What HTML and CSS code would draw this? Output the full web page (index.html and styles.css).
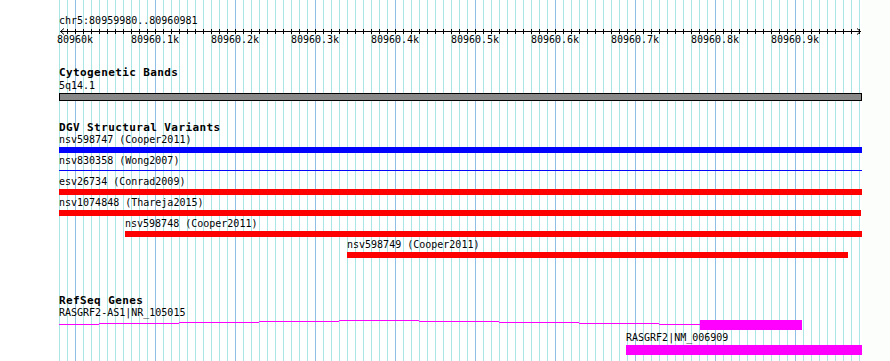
FILE: index.html
```html
<!DOCTYPE html>
<html lang="en">
<head>
  <meta charset="UTF-8" />
  <title>chr5:80959980..80960981</title>
  <link rel="stylesheet" href="styles.css">
</head>
<body>
  <div class="panel">
    <!-- guidelines: every 8px, darker every 80px -->
    <svg class="grid" width="803" height="361" shape-rendering="crispEdges">
      <defs>
        <pattern id="guides" width="80" height="10" patternUnits="userSpaceOnUse">
          <rect x="0" width="1" height="10" class="minor"/>
          <rect x="8" width="1" height="10" class="minor"/>
          <rect x="16" width="1" height="10" class="major"/>
          <rect x="24" width="1" height="10" class="minor"/>
          <rect x="32" width="1" height="10" class="minor"/>
          <rect x="40" width="1" height="10" class="minor"/>
          <rect x="48" width="1" height="10" class="minor"/>
          <rect x="56" width="1" height="10" class="minor"/>
          <rect x="64" width="1" height="10" class="minor"/>
          <rect x="72" width="1" height="10" class="minor"/>
        </pattern>
      </defs>
      <rect width="803" height="361" fill="url(#guides)"/>
    </svg>

    <!-- base position ruler -->
    <div class="ruler">
      <div class="label">chr5:80959980..80960981</div>
      <svg class="axis" width="803" height="9" viewBox="0 0 803 9">
        <defs>
          <pattern id="ticks" width="8" height="9" patternUnits="userSpaceOnUse">
            <rect x="0" y="3" width="1" height="5" fill="#000"/>
          </pattern>
        </defs>
        <rect x="8" y="0" width="793" height="9" fill="url(#ticks)" shape-rendering="crispEdges"/>
        <rect x="1" y="5" width="801" height="1" fill="#000" shape-rendering="crispEdges"/>
        <path d="M5 2.5L1.5 5.5L5 8.5M798 2.5L801.5 5.5L798 8.5" fill="none" stroke="#000"/>
      </svg>
      <div class="scale">
        <span>80960k</span>
        <span>80960.1k</span>
        <span>80960.2k</span>
        <span>80960.3k</span>
        <span>80960.4k</span>
        <span>80960.5k</span>
        <span>80960.6k</span>
        <span>80960.7k</span>
        <span>80960.8k</span>
        <span>80960.9k</span>
      </div>
    </div>

    <!-- Cytogenetic Bands -->
    <section class="track cyto">
      <h3>Cytogenetic Bands</h3>
      <div class="label">5q14.1</div>
      <div class="band"></div>
    </section>

    <!-- DGV Structural Variants -->
    <section class="track dgv">
      <h3>DGV Structural Variants</h3>
      <div class="feature">
        <div class="label">nsv598747 (Cooper2011)</div>
        <div class="bar gain" style="margin-left:0;width:803px"></div>
      </div>
      <div class="feature">
        <div class="label">nsv830358 (Wong2007)</div>
        <div class="bar thin" style="margin-left:0;width:803px"></div>
      </div>
      <div class="feature">
        <div class="label">esv26734 (Conrad2009)</div>
        <div class="bar loss" style="margin-left:0;width:803px"></div>
      </div>
      <div class="feature">
        <div class="label">nsv1074848 (Thareja2015)</div>
        <div class="bar loss" style="margin-left:0;width:802px"></div>
      </div>
      <div class="feature">
        <div class="label" style="margin-left:66px">nsv598748 (Cooper2011)</div>
        <div class="bar loss" style="margin-left:66px;width:737px"></div>
      </div>
      <div class="feature">
        <div class="label" style="margin-left:288px">nsv598749 (Cooper2011)</div>
        <div class="bar loss" style="margin-left:288px;width:501px"></div>
      </div>
    </section>

    <!-- RefSeq Genes -->
    <section class="track refseq">
      <h3>RefSeq Genes</h3>
      <div class="gene">
        <div class="label">RASGRF2-AS1|NR_105015</div>
        <svg class="gene-model" width="803" height="10" viewBox="0 0 803 10" fill="#f0f" shape-rendering="crispEdges">
          <rect x="0" y="4" width="40" height="1"/>
          <rect x="40" y="3" width="80" height="1"/>
          <rect x="120" y="2" width="80" height="1"/>
          <rect x="200" y="1" width="80" height="1"/>
          <rect x="280" y="0" width="80" height="1"/>
          <rect x="360" y="1" width="80" height="1"/>
          <rect x="440" y="2" width="80" height="1"/>
          <rect x="520" y="3" width="80" height="1"/>
          <rect x="600" y="4" width="41" height="1"/>
          <rect x="641" y="0" width="102" height="10"/>
        </svg>
      </div>
      <div class="gene">
        <div class="label" style="margin-left:567px">RASGRF2|NM_006909</div>
        <div class="exon" style="margin-left:567px;width:236px"></div>
      </div>
    </section>
  </div>
</body>
</html>
```

FILE: styles.css
```css
* {
  box-sizing: border-box;
}

body {
  margin: 0;
  width: 890px;
  height: 361px;
  overflow: hidden;
  font-family: "DejaVu Sans Mono", monospace;
  font-size: 10px;
  line-height: 10px;
  color: #000;
  background: linear-gradient(90deg, #fff 862px, #fbfefb 862px);
}

/* data area */
.panel {
  position: relative;
  z-index: 0;
  margin-left: 59px;
  width: 803px;
  height: 361px;
  padding-top: 16px;
  background-color: #fff;
}

.grid {
  position: absolute;
  top: 0;
  left: 0;
  z-index: -1;
}

.grid .minor {
  fill: #aae6e6;
}

.grid .major {
  fill: #8fbfe6;
}

.label {
  height: 10px;
  white-space: nowrap;
}

.axis {
  display: block;
}

.scale {
  display: flex;
  margin-left: -24px;
}

.scale span {
  flex: none;
  width: 80px;
  text-align: center;
}

h3 {
  margin: 0;
  height: 12px;
  font-size: 11px;
  line-height: 12px;
  letter-spacing: 0.4px;
  font-weight: bold;
}

/* cytogenetic bands */
.cyto h3 {
  margin-top: 22px;
}

.cyto .label {
  margin-top: 2px;
}

.band {
  margin-top: 2px;
  height: 8px;
  border: 1px solid #000;
  background-color: #888;
}

/* DGV */
.dgv h3 {
  margin-top: 21px;
}

.dgv .feature:first-of-type {
  margin-top: 1px;
}

.feature {
  padding-bottom: 3px;
}

.bar {
  margin-top: 2px;
  height: 6px;
}

.bar.gain {
  background-color: #00f;
}

.bar.loss {
  background-color: #f00;
}

.bar.thin {
  background: linear-gradient(#00f, #00f) 0 2px / 100% 1px no-repeat;
}

/* RefSeq */
.refseq h3 {
  margin-top: 34px;
}

.refseq .gene:first-of-type {
  margin-top: 1px;
}

.gene {
  padding-bottom: 3px;
}

.gene-model {
  display: block;
  margin-top: 2px;
}

.exon {
  margin-top: 2px;
  height: 10px;
  background-color: #f0f;
}
```
